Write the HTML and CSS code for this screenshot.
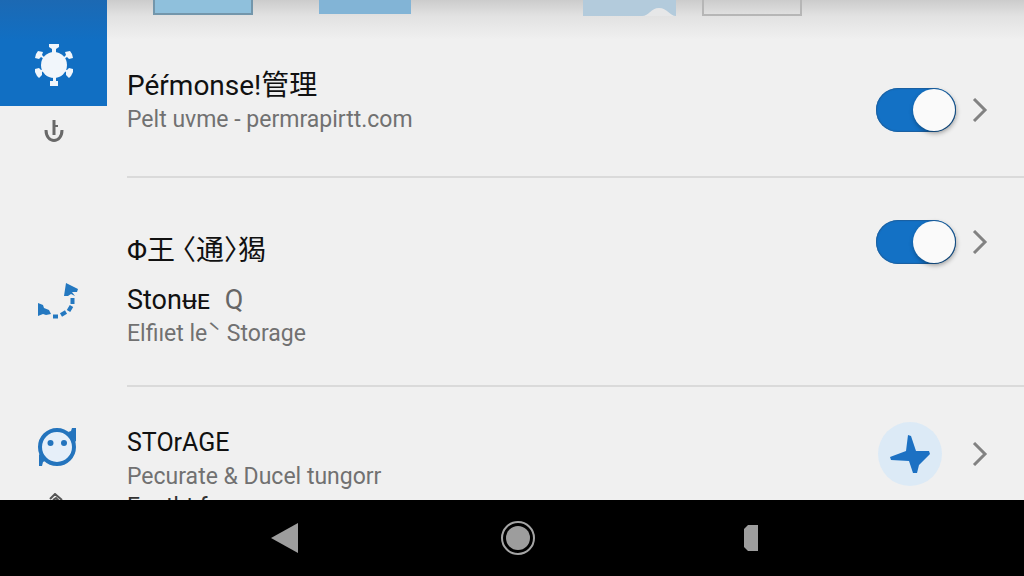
FILE: index.html
```html
<!DOCTYPE html>
<html lang="zh">

<head>
    <meta charset="UTF-8">
    <meta name="viewport" content="width=device-width, initial-scale=1.0">
    <title>Storage</title>
    <link rel="stylesheet" href="styles.css">
</head>

<body>
    <main class="screen">
        <aside class="sidebar">
            <button class="tile" aria-label="Settings">
                <svg width="40" height="44" viewBox="0 0 40 44" fill="#f1f6fb">
                    <circle cx="20" cy="22" r="13"/>
                    <path d="M15 1h10v3l-3 2v4h-4V6l-3-2zM16 38h8v5h-8zM19 34h3v5h-3z"/>
                    <path d="M4 8l5 1-1 3 3 3-1 1-3-2-2 2-4-1 1-4zM36 8l-5 1 1 3-3 3 1 1 3-2 2 2 4-1-1-4z"/>
                    <path d="M1 26l4-1 2 2 3-1 1 1-3 2 0 3-3 3-2-2-2-4zM39 26l-4-1-2 2-3-1-1 1 3 2 0 3 3 3 2-2 2-4z"/>
                </svg>
            </button>
            <button class="side-icon power" aria-label="Power">
                <svg width="20" height="24" viewBox="0 0 20 24" fill="none" stroke="#696969">
                    <path d="M2 11c0 14 16 14 16 0" stroke-width="3"/>
                    <path d="M10 1v15" stroke-width="3"/>
                    <path d="M9 7h5" stroke-width="2"/>
                </svg>
            </button>
            <button class="side-icon route" aria-label="Transfer">
                <svg width="40" height="36" viewBox="0 0 40 36">
                    <path d="M28 0l12 6-1 3-5 0 3 4-4-2-3 2-4 0zM0 20l5 2 1 3 5 2 2 4-5 1-3-1-5 2z" fill="#2478c0"/>
                    <path d="M34.500 15v6M33.500 23l-3 5M28 29l-5 3M20 33.500h-5" fill="none" stroke="#2478c0" stroke-width="4"/>
                </svg>
            </button>
            <button class="side-icon chat" aria-label="Chat">
                <svg width="40" height="40" viewBox="0 0 40 40">
                    <circle cx="20" cy="20" r="17" fill="#e6eff9" stroke="#2474bd" stroke-width="4"/>
                    <path d="M31 5l3-1 1-3 4 0v14zM2 39V27l8 6-4 2-1 4z" fill="#2474bd"/>
                    <circle cx="13.500" cy="16" r="3" fill="#2474bd"/>
                    <circle cx="27" cy="16" r="3" fill="#2474bd"/>
                </svg>
            </button>
            <button class="side-icon edit" aria-label="Edit">
                <svg width="14" height="14" viewBox="0 0 14 14" fill="none" stroke="#555" stroke-width="2">
                    <path d="M1 6l5-5 7 6M4 7l3-2 4 4"/>
                </svg>
            </button>
        </aside>

        <div class="content">
            <div class="thumbs">
                <div class="thumb framed"></div>
                <div class="thumb plain"></div>
                <div class="thumb pale">
                    <svg width="34" height="9" viewBox="0 0 34 9"><path d="M0 9c7 0 9-8 17-8s11 8 17 8z" fill="#e6e7e8"/></svg>
                </div>
                <div class="thumb empty"></div>
            </div>

            <section class="row first">
                <div class="text">
                    <h2><label for="manage">Péŕmonse!管理</label></h2>
                    <p>Pelt uvme - permrapirtt.com</p>
                </div>
                <div class="controls">
                    <input type="checkbox" class="switch" id="manage" checked>
                    <button class="more" aria-label="Open">
                        <svg width="16" height="24" viewBox="0 0 16 24"><path d="M2 1l11 11L2 23" fill="none" stroke="#828282" stroke-width="3"/></svg>
                    </button>
                </div>
            </section>

            <section class="row tall">
                <div class="text">
                    <h2 class="cjk"><label for="notify">Φ王 〈通〉猲</label></h2>
                    <h2>Stonʉᴇ <span class="mark">Q</span></h2>
                    <p>Elfiıet leˋ Storage</p>
                </div>
                <div class="controls">
                    <input type="checkbox" class="switch" id="notify" checked>
                    <button class="more" aria-label="Open">
                        <svg width="16" height="24" viewBox="0 0 16 24"><path d="M2 1l11 11L2 23" fill="none" stroke="#828282" stroke-width="3"/></svg>
                    </button>
                </div>
            </section>

            <section class="row last">
                <div class="text">
                    <h2 class="caps">STOrAGE</h2>
                    <p>Pecurate &amp; Ducel tungorr</p>
                    <p class="next">Eootht frunnr</p>
                </div>
                <div class="controls">
                    <button class="star" aria-label="Favorite">
                        <svg width="40" height="40" viewBox="0 0 40 40"><path d="M18 1l3 1 5 15 13 0 1 3-11 11-2 8-4 0-4-12-18-1-1-3 16-6z" fill="#1c71c3"/></svg>
                    </button>
                    <button class="more" aria-label="Open">
                        <svg width="16" height="24" viewBox="0 0 16 24"><path d="M2 1l11 11L2 23" fill="none" stroke="#828282" stroke-width="3"/></svg>
                    </button>
                </div>
            </section>
        </div>
    </main>

    <nav class="navbar">
        <button aria-label="Back">
            <svg width="28" height="30" viewBox="0 0 28 30"><path d="M0 15L27 0v30z" fill="#9d9d9d"/></svg>
        </button>
        <button aria-label="Home">
            <svg width="36" height="36" viewBox="0 0 36 36">
                <circle cx="18" cy="18" r="16" fill="none" stroke="#a5a5a5" stroke-width="2"/>
                <circle cx="18" cy="18" r="12" fill="#9d9d9d"/>
            </svg>
        </button>
        <button aria-label="Recent">
            <svg width="14" height="26" viewBox="0 0 14 26"><path d="M4 0h10v26H4l-4-4V4z" fill="#9d9d9d"/></svg>
        </button>
    </nav>
</body>

</html>
```

FILE: styles.css
```css
* {
    box-sizing: border-box;
}

body {
    margin: 0;
    height: 100vh;
    display: flex;
    flex-direction: column;
    font-family: Roboto, "Noto Sans CJK SC", sans-serif;
    background-color: #f0f0f0;
}

button {
    display: flex;
    align-items: center;
    justify-content: center;
    padding: 0;
    border: none;
    background: none;
    cursor: pointer;
}

.screen {
    flex: 1;
    min-height: 0;
    display: flex;
    overflow: hidden;
    background: linear-gradient(#cccccc, #e2e2e2 16px, #f0f0f0 40px);
}

/* left icon column */
.sidebar {
    flex: none;
    width: 107px;
    display: flex;
    flex-direction: column;
    align-items: center;
}

.tile {
    flex: none;
    width: 100%;
    height: 106px;
    padding-top: 24px;
    background: linear-gradient(#1c69b3, #116fc3 40px);
}

.side-icon {
    flex: none;
}

.power {
    margin-top: 13px;
}

.route {
    margin: 140px 0 0 8px;
}

.chat {
    margin: 108px 0 0 6px;
}

.edit {
    margin: 26px 0 0 4px;
}

.content {
    flex: 1;
    min-width: 0;
    padding-left: 20px;
}

/* bottoms of the cards scrolled off the top */
.thumbs {
    display: flex;
    height: 16px;
    padding-left: 26px;
    align-items: flex-start;
}

.thumb {
    width: 100px;
    height: 15px;
}

.framed {
    background-color: #8fc0dc;
    border: 2px solid #7396ab;
    border-top: none;
}

.plain {
    width: 92px;
    height: 14px;
    margin-left: 66px;
    background-color: #82b4d6;
}

.pale {
    display: flex;
    justify-content: flex-end;
    align-items: flex-end;
    width: 93px;
    height: 16px;
    margin-left: 172px;
    background-color: #b3cbdc;
}

.empty {
    height: 16px;
    margin-left: 26px;
    border: 2px solid #b6b6b6;
    border-top: none;
}

/* settings rows */
.row {
    display: flex;
    justify-content: space-between;
    align-items: flex-start;
    border-bottom: 2px solid #dadada;
}

.first {
    padding: 53px 36px 39px 0;
}

.first .controls {
    margin-top: 19px;
}

.first h2 {
    font-size: 28px;
}

.tall {
    padding: 42px 36px 34px 0;
}

.tall .text {
    padding-top: 14px;
}

.last {
    padding: 35px 36px 0 0;
    border: none;
}

.last .text {
    padding-top: 4px;
}

h2 {
    margin: 0;
    font-size: 27px;
    line-height: 34px;
    font-weight: 400;
    color: #111;
}

.cjk {
    margin-bottom: 15px;
    font-size: 28px;
    font-feature-settings: "halt";
}

.caps {
    font-size: 25px;
}

.mark {
    margin-left: 8px;
    color: #666;
}

p {
    margin: 0;
    font-size: 23px;
    line-height: 34px;
    color: #717171;
}

/* only its top shows above the navigation bar */
.next {
    line-height: 26px;
    color: #333;
}

.controls {
    display: flex;
    align-items: center;
    gap: 16px;
}

.last .controls {
    gap: 30px;
}

.switch {
    appearance: none;
    display: flex;
    justify-content: flex-end;
    width: 80px;
    height: 44px;
    margin: 0;
    padding: 1px;
    border-radius: 22px;
    background-color: #1371c5;
    box-shadow: inset 0 0 1px 1px #1c5f9e;
    cursor: pointer;
}

.switch::before {
    content: "";
    width: 42px;
    height: 42px;
    border-radius: 50%;
    background-color: #fafafa;
    box-shadow: 1px 2px 5px rgba(0, 0, 0, 0.4);
}

.switch:not(:checked) {
    justify-content: flex-start;
    background-color: #999;
}

.star {
    width: 64px;
    height: 64px;
    border-radius: 50%;
    background-color: #dceaf6;
}

/* system navigation bar */
.navbar {
    flex: none;
    height: 76px;
    display: grid;
    grid-template-columns: repeat(3, 23%);
    justify-content: center;
    padding-left: 12px;
    background-color: #000;
}
```
